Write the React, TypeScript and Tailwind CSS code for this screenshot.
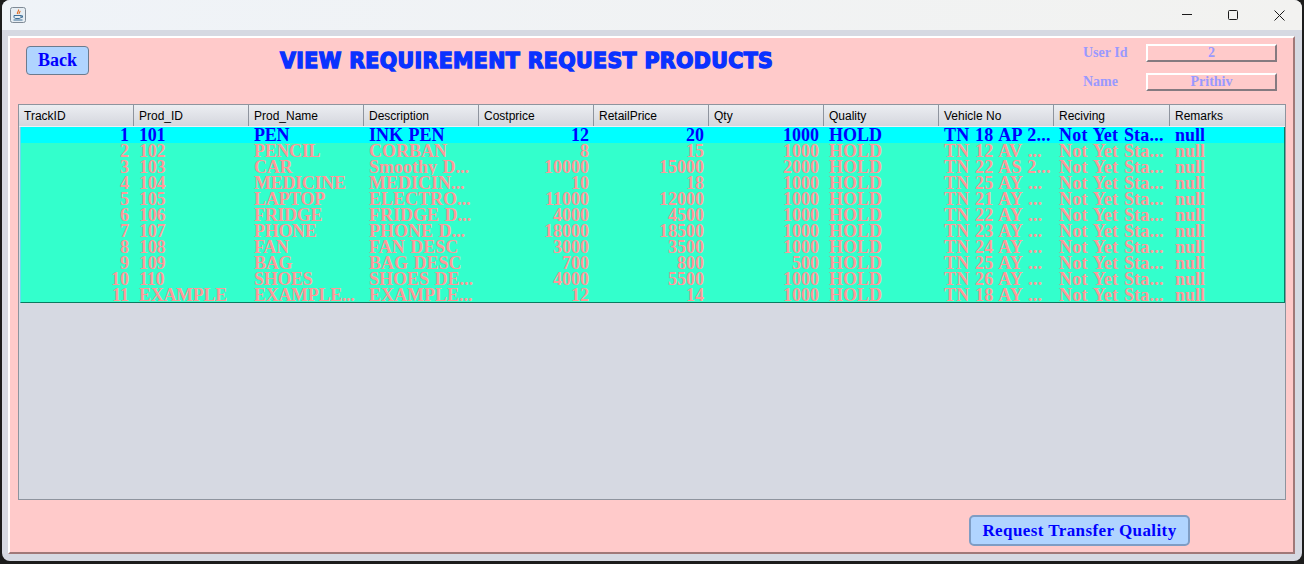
const serif = "font-['Liberation_Serif',serif] font-bold";

const columns = [
  { name: 'TrackID', cls: 'w-[115px]' },
  { name: 'Prod_ID', cls: 'w-[115px]' },
  { name: 'Prod_Name', cls: 'w-[115px]' },
  { name: 'Description', cls: 'w-[115px]' },
  { name: 'Costprice', cls: 'w-[115px]' },
  { name: 'RetailPrice', cls: 'w-[115px]' },
  { name: 'Qty', cls: 'w-[115px]' },
  { name: 'Quality', cls: 'w-[115px]' },
  { name: 'Vehicle No', cls: 'w-[115px]' },
  { name: 'Reciving', cls: 'w-[116px]' },
  { name: 'Remarks', cls: 'flex-1' },
];

const rows = [
  ['1', '101', 'PEN', 'INK PEN', '12', '20', '1000', 'HOLD', 'TN 18 AP 2...', 'Not Yet Sta...', 'null'],
  ['2', '102', 'PENCIL', 'CORBAN', '8', '15', '1000', 'HOLD', 'TN 12 AV ...', 'Not Yet Sta...', 'null'],
  ['3', '103', 'CAR', 'Smoothy D...', '10000', '15000', '2000', 'HOLD', 'TN 22 AS 2...', 'Not Yet Sta...', 'null'],
  ['4', '104', 'MEDICINE', 'MEDICIN...', '10', '18', '1000', 'HOLD', 'TN 25 AY ...', 'Not Yet Sta...', 'null'],
  ['5', '105', 'LAPTOP', 'ELECTRO...', '11000', '12000', '1000', 'HOLD', 'TN 21 AY ...', 'Not Yet Sta...', 'null'],
  ['6', '106', 'FRIDGE', 'FRIDGE D...', '4000', '4500', '1000', 'HOLD', 'TN 22 AY ...', 'Not Yet Sta...', 'null'],
  ['7', '107', 'PHONE', 'PHONE D...', '18000', '18500', '1000', 'HOLD', 'TN 23 AY ...', 'Not Yet Sta...', 'null'],
  ['8', '108', 'FAN', 'FAN DESC', '3000', '3500', '1000', 'HOLD', 'TN 24 AY ...', 'Not Yet Sta...', 'null'],
  ['9', '109', 'BAG', 'BAG DESC', '700', '800', '500', 'HOLD', 'TN 25 AY ...', 'Not Yet Sta...', 'null'],
  ['10', '110', 'SHOES', 'SHOES DE...', '4000', '5500', '1000', 'HOLD', 'TN 26 AY ...', 'Not Yet Sta...', 'null'],
  ['11', 'EXAMPLE', 'EXAMPLE...', 'EXAMPLE...', '12', '14', '1000', 'HOLD', 'TN 18 AY ...', 'Not Yet Sta...', 'null'],
];

const rightAligned = [0, 4, 5, 6];

function cellSpacing(j: number) {
  if (j === 8 || j === 9) return 'tracking-[0.2px]';
  if (j === 1 || j === 2) return 'tracking-[-0.3px]';
  return '';
}

function InfoField({ label, value }: { label: string; value: string }) {
  return (
    <div className="flex items-center h-[18px]">
      <span className={`w-[63px] pb-[2px] text-[14px] text-[#9999ff] ${serif}`}>{label}</span>
      <div className={`w-[131px] h-[18px] flex items-center justify-center border-2 border-b-[#857a80] border-r-[#857a80] border-t-white border-l-white text-[14px] leading-none text-[#9999ff] ${serif}`}>
        {value}
      </div>
    </div>
  );
}

export default function App() {
  return (
    <div className="w-[1304px] h-[564px] bg-[#1c1c1c] overflow-hidden px-[2px] pb-[3px]">
      <div className="h-full flex flex-col bg-[#d6d9e2] rounded-t-[8px] rounded-b-[8px] overflow-hidden">
        <div className="h-[30px] shrink-0 flex items-center justify-between bg-gradient-to-r from-[#eff3f8] to-[#f2f2f0]">
          <svg width="16" height="16" viewBox="0 0 16 16" className="ml-[8px]">
            <rect x="0.5" y="0.5" width="15" height="15" rx="2" fill="#e6edf3" stroke="#7f8a96" />
            <path d="M8.5 2.5c1 1.5-2 2.5-1 4.5M10 4c.5 1-1.5 1.5-.8 3" stroke="#e0702a" strokeWidth="1.2" fill="none" />
            <path d="M4 8.5h7v1.5c0 1-1 1.5-2 1.5H6c-1 0-2-.5-2-1.5zM11 8.8h1.5v1.5H11" fill="none" stroke="#3f6f96" />
            <path d="M3.5 13h9" stroke="#3f6f96" />
          </svg>
          <div className="flex items-center">
            <div className="w-[46px] flex justify-center">
              <svg width="10" height="10" viewBox="0 0 10 10"><path d="M0 4.5h10" stroke="#1a1a1a" /></svg>
            </div>
            <div className="w-[46px] flex justify-center">
              <svg width="10" height="10" viewBox="0 0 10 10"><rect x="0.5" y="0.5" width="9" height="9" rx="1" fill="none" stroke="#1a1a1a" /></svg>
            </div>
            <div className="w-[46px] flex justify-center">
              <svg width="11" height="11" viewBox="0 0 11 11"><path d="M.5.5l10 10M10.5.5l-10 10" stroke="#1a1a1a" /></svg>
            </div>
          </div>
        </div>

        <div className="mt-[6px] ml-[6px] mr-[7px] mb-[7px] flex-1 flex flex-col bg-[#ffcaca] border-t-2 border-l-2 border-t-white border-l-white border-b-2 border-r-2 border-b-[#a07878] border-r-[#a07878] pl-[8px] pr-[7px]">
          <div className="h-[66px] shrink-0 flex">
            <button className={`mt-[8px] ml-[8px] w-[63px] h-[29px] rounded-[4px] border border-[#6b7b8e] bg-[#b0d4ff] text-[18px] text-[#0000ff] ${serif}`}>
              Back
            </button>
            <div className="ml-[191px] mt-[10px] w-[495px] h-[26px] flex items-center whitespace-nowrap font-['DejaVu_Sans',sans-serif] font-bold text-[20.5px] tracking-[0.38px] text-[#0a32ff] [-webkit-text-stroke:1.4px_#0a32ff]">
              VIEW REQUIREMENT REQUEST PRODUCTS
            </div>
            <div className="ml-auto mr-[9px] mt-[6px] flex flex-col gap-[11px]">
              <InfoField label="User Id" value="2" />
              <InfoField label="Name" value="Prithiv" />
            </div>
          </div>

          <div className="h-[396px] shrink-0 border border-[#8e949e] bg-[#d6d9e2]">
            <div className="h-[22px] flex border-b border-b-[#eef0f5] bg-gradient-to-b from-[#eceef2] to-[#d4d6dd]">
              {columns.map((c) => (
                <div key={c.name} className={`${c.cls} h-full flex items-center pl-[5px] border-r border-r-[#8e949e] font-['Liberation_Sans',sans-serif] text-[12px] text-black last:border-r-0`}>
                  {c.name}
                </div>
              ))}
            </div>
            <div className="h-[176px] overflow-hidden ml-[1px] border-b border-b-[#0b7a60] border-l border-l-[#66ddee] border-r border-r-[#0b7a60]">
              {rows.map((row, i) => (
                <div
                  key={row[0]}
                  className={`flex h-[16px] overflow-hidden text-[18px] leading-[16px] [word-spacing:1px] ${serif} ${i === 0 ? 'bg-[#00ffff] text-[#0000ff]' : 'bg-[#33ffcc] text-[#ff9999]'}`}
                >
                  {row.map((cell, j) => (
                    <div
                      key={j}
                      className={`${j === 0 ? 'w-[113px]' : columns[j].cls} whitespace-nowrap overflow-hidden px-[5px] ${rightAligned.includes(j) ? 'text-right' : ''} ${cellSpacing(j)}`}
                    >
                      {cell}
                    </div>
                  ))}
                </div>
              ))}
            </div>
          </div>

          <div className="flex-1 flex justify-end items-start pt-[15px] pr-[96px]">
            <button className={`w-[221px] h-[31px] rounded-[5px] border-2 border-[#7f9dc4] bg-[#b0d4ff] text-[17px] tracking-[0.42px] text-[#0000ff] ${serif}`}>
              Request Transfer Quality
            </button>
          </div>
        </div>
      </div>
    </div>
  );
}
